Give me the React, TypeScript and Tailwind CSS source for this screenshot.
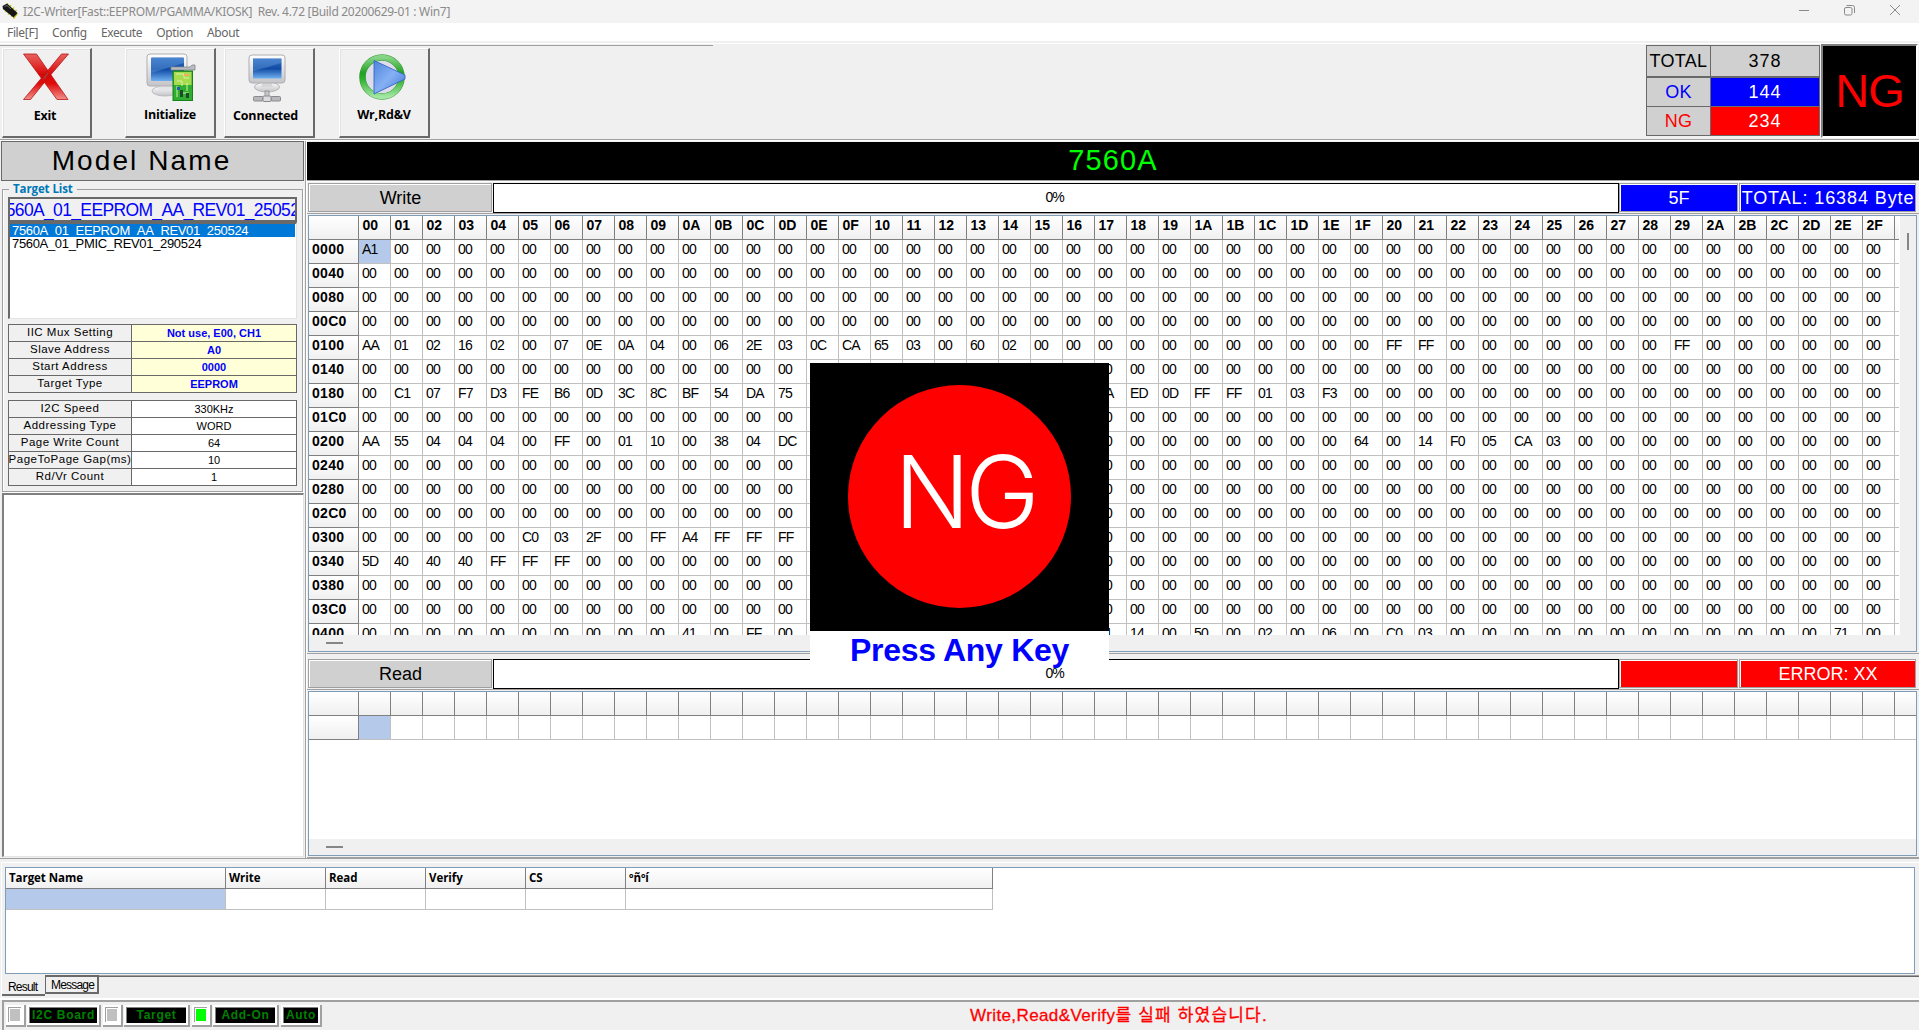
import type { ReactNode } from "react";

const COLUMNS = Array.from({ length: 48 }, (_, i) => i.toString(16).toUpperCase().padStart(2, "0"));

/* Memory contents by row offset; each entry is [start column, bytes]. */
const DATA: Record<string, [number, string][]> = {
  "0000": [[0, "A1"]],
  "0100": [
    [0, "AA 01 02 16 02 00 07 0E 0A 04 00 06 2E 03 0C CA 65 03 00 60 02"],
    [32, "FF FF"],
    [41, "FF"],
  ],
  "0180": [
    [0, "00 C1 07 F7 D3 FE B6 0D 3C 8C BF 54 DA 75"],
    [23, "0A ED 0D FF FF 01 03 F3"],
  ],
  "0200": [
    [0, "AA 55 04 04 04 00 FF 00 01 10 00 38 04 DC"],
    [31, "64 00 14 F0 05 CA 03"],
  ],
  "0300": [[5, "C0 03 2F 00 FF A4 FF FF FF"]],
  "0340": [[0, "5D 40 40 40 FF FF FF"]],
  "0400": [
    [10, "41 00 FF"],
    [23, "01 14 00 50 00 02 00 06 00 C0 03"],
    [46, "71"],
  ],
};

const ROWS = Array.from({ length: 17 }, (_, i) => {
  const address = (i * 64).toString(16).toUpperCase().padStart(4, "0");
  const bytes = COLUMNS.map(() => "00");
  (DATA[address] ?? []).forEach(([start, text]) =>
    text.split(" ").forEach((b, k) => {
      bytes[start + k] = b;
    }),
  );
  return { address, bytes };
});

function HeaderCell({ className, children }: { className: string; children?: ReactNode }) {
  return (
    <div
      className={`shrink-0 border-r border-b border-[#808080] bg-linear-to-b from-white to-[#f0f0f0] font-bold ${className}`}
    >
      {children}
    </div>
  );
}

function HexHeader({ labels }: { labels: string[] }) {
  return (
    <div className="flex h-[24px] w-max">
      <HeaderCell className="w-[50px]" />
      {labels.map((c, i) => (
        <HeaderCell key={i} className="w-[32px] pt-[1px] pl-[3.5px] text-[14px] leading-[17px]">
          {c}
        </HeaderCell>
      ))}
      <HeaderCell className="w-[32px]" />
    </div>
  );
}

function HexRow({ address, bytes, selected }: { address: string; bytes: string[]; selected: boolean }) {
  return (
    <div className="flex h-[24px] w-max">
      <HeaderCell className="w-[50px] pt-[1px] pl-[3px] text-[14px] leading-[17px] tracking-[0.3px]">
        {address}
      </HeaderCell>
      {bytes.map((b, i) => (
        <div
          key={i}
          className={`w-[32px] shrink-0 border-r border-b border-[#c0c0c0] pt-[1px] pl-[3px] text-[14px] leading-[17px] tracking-[-0.8px] ${
            selected && i === 0 ? "bg-[#b5caea]" : "bg-white"
          }`}
        >
          {b}
        </div>
      ))}
      <div className="w-[32px] shrink-0 border-b border-[#c0c0c0]" />
    </div>
  );
}

function Framed({ className, children }: { className: string; children?: ReactNode }) {
  return (
    <div className={`shrink-0 border border-[#a0a0a0] bg-white pt-[1px] pl-[1px] ${className}`}>
      {children}
    </div>
  );
}

function OperationBar({
  title,
  left,
  right,
  color,
}: {
  title: string;
  left: string;
  right: string;
  color: string;
}) {
  return (
    <div className="flex h-[30px] pl-[1px] text-[18px]">
      <Framed className="mr-[1px] h-[29px] w-[184px]">
        <div className="flex h-full items-center justify-center bg-[#d0d0d0]">{title}</div>
      </Framed>
      <div className="flex h-[30px] w-[1126px] shrink-0 items-center justify-center border border-black bg-white pr-[3px] pb-[2px] text-[14px] tracking-[-1.2px]">
        0%
      </div>
      <Framed className="mr-[1px] h-[29px] w-[119px]">
        <div className={`flex h-full items-center justify-center text-white ${color}`}>{left}</div>
      </Framed>
      <Framed className="h-[29px] w-[177px]">
        <div
          className={`flex h-full items-center justify-center overflow-hidden whitespace-nowrap text-white ${color} ${
            right.length > 10 ? "tracking-[0.9px]" : ""
          }`}
        >
          {right}
        </div>
      </Framed>
    </div>
  );
}

function ToolButton({
  label,
  icon,
  className,
  labelClass,
}: {
  label: string;
  icon: ReactNode;
  className: string;
  labelClass: string;
}) {
  return (
    <div
      className={`h-[90px] shrink-0 border-t border-r-2 border-b-2 border-l border-t-white border-r-[#696969] border-b-[#696969] border-l-white bg-[#f0f0f0] shadow-[inset_1px_1px_0_#e3e3e3] ${className}`}
    >
      <div className="flex h-[56px] justify-center pt-[4px]">{icon}</div>
      <div
        className={`text-center font-['Open_Sans','Noto_Sans',sans-serif] text-[12.5px] leading-[18px] font-bold tracking-[-0.2px] ${labelClass}`}
      >
        {label}
      </div>
    </div>
  );
}

function ExitIcon() {
  return (
    <svg width="46" height="48" viewBox="0 0 46 48" className="-ml-[2px]">
      <defs>
        <linearGradient id="exitRed" x1="0" y1="0" x2="0" y2="1">
          <stop offset="0" stopColor="#e8635f" />
          <stop offset="0.45" stopColor="#d80808" />
          <stop offset="0.65" stopColor="#e00c0c" />
          <stop offset="1" stopColor="#f0908c" />
        </linearGradient>
      </defs>
      <path d="M0.5 1H13.5L45 46.5H34Z" fill="url(#exitRed)" stroke="#b81414" strokeWidth="0.8" />
      <path
        d="M38.5 1H45.5L25 25L7.5 46.5H0.5L21 22Z"
        fill="url(#exitRed)"
        stroke="#b81414"
        strokeWidth="0.8"
      />
      <path d="M20.5 26L25 20" stroke="#8a5050" strokeWidth="1.2" />
    </svg>
  );
}

function ScreenGradients({ id }: { id: string }) {
  return (
    <defs>
      <linearGradient id={`${id}s`} x1="0" y1="0" x2="0" y2="1">
        <stop offset="0" stopColor="#2f6fc4" />
        <stop offset="0.45" stopColor="#1450a8" />
        <stop offset="0.5" stopColor="#0f4aa4" />
        <stop offset="1" stopColor="#6fb0f0" />
      </linearGradient>
      <linearGradient id={`${id}g`} x1="0" y1="0" x2="0" y2="1">
        <stop offset="0" stopColor="#ffffff" />
        <stop offset="1" stopColor="#c4c4c8" />
      </linearGradient>
    </defs>
  );
}

function InitializeIcon() {
  return (
    <svg width="50" height="50" viewBox="0 0 50 50" className="ml-[1px]">
      <ScreenGradients id="init" />
      <ellipse cx="19" cy="38" rx="13" ry="5" fill="url(#initg)" stroke="#b4b4b8" strokeWidth="0.8" />
      <path d="M14 30H25L27 38H12Z" fill="#e4e4e8" />
      <rect x="1" y="1" width="40" height="32" rx="3" fill="url(#initg)" stroke="#aeaeb4" />
      <rect x="5" y="4.5" width="33" height="23.5" rx="1" fill="url(#inits)" />
      <path d="M5 5H38V10Q18 16 5 20Z" fill="#79aee8" opacity="0.35" />
      <path d="M25 14H44L46 12H49V17H25Z" fill="#b8bcc0" stroke="#85898d" strokeWidth="0.8" />
      <rect x="27" y="18" width="19.5" height="29.5" fill="#2fae2f" stroke="#1b7f1b" />
      <rect x="28" y="19" width="17.5" height="13" fill="#a8dc50" />
      <path d="M30 21H38V25H43M31 28H36V33M41 30V38M37 40H43M31 33V44" stroke="#d9f2a8" fill="none" />
      <path d="M34 37H37V44H34ZM40 40H43V45H40Z" fill="#1c4a2c" />
      <path d="M31 34h3v3h-3z" fill="#2858b8" />
      <path d="M38 21h5v2h-5z" fill="#f0b060" />
    </svg>
  );
}

function ConnectedIcon() {
  return (
    <svg width="38" height="50" viewBox="0 0 38 50" className="mt-[1px] -ml-[5px]">
      <ScreenGradients id="conn" />
      <ellipse cx="19" cy="33" rx="12.5" ry="5" fill="url(#conng)" stroke="#a8a8ac" strokeWidth="0.8" />
      <path d="M15 28H23L25 33H13Z" fill="#d6d6da" />
      <rect x="1" y="1" width="36" height="28" rx="3" fill="url(#conng)" stroke="#aeaeb4" />
      <rect x="5" y="4.5" width="28.5" height="20" fill="url(#conns)" />
      <path d="M5 5H33V9Q18 14 5 17Z" fill="#79aee8" opacity="0.35" />
      <rect x="17" y="37" width="4" height="8" fill="#c8c8cc" stroke="#8a8a8e" strokeWidth="0.8" />
      <rect x="5.5" y="42.5" width="9.5" height="4.5" rx="1" fill="#b8b8bc" stroke="#8a8a8e" />
      <rect x="23" y="42.5" width="9.5" height="4.5" rx="1" fill="#b8b8bc" stroke="#8a8a8e" />
      <rect x="15" y="42" width="8" height="5.5" rx="1" fill="#dcdce0" stroke="#8a8a8e" />
    </svg>
  );
}

function PlayIcon() {
  return (
    <svg width="47" height="47" viewBox="0 0 47 47" className="mt-[1px] -ml-[3px]">
      <defs>
        <linearGradient id="ring" x1="0" y1="0" x2="0" y2="1">
          <stop offset="0" stopColor="#86d486" />
          <stop offset="0.4" stopColor="#22a022" />
          <stop offset="0.55" stopColor="#2fae2f" />
          <stop offset="1" stopColor="#a2e6a2" />
        </linearGradient>
        <linearGradient id="tri" x1="0" y1="0" x2="1" y2="1">
          <stop offset="0" stopColor="#4d84dc" />
          <stop offset="0.5" stopColor="#86b0f4" />
          <stop offset="1" stopColor="#3f76d4" />
        </linearGradient>
      </defs>
      <circle cx="23" cy="23" r="19.5" fill="#dcdcea" stroke="#3b9a3b" strokeWidth="6.5" />
      <circle cx="23" cy="23" r="19.5" fill="none" stroke="url(#ring)" strokeWidth="5.5" />
      <path d="M15 6.5L46 21V25L15 40Z" fill="url(#tri)" stroke="#3566c4" strokeWidth="0.9" />
    </svg>
  );
}

function ChipIcon() {
  return (
    <svg width="16" height="17" viewBox="0 0 16 17" className="mt-[2px] ml-[2px] shrink-0">
      <path
        d="M1.5 7.5L6 1.5M3.5 10L9 3M6 12.5L12 5.5M9 14.5L14.5 8M11.5 16.5L15.5 11.5"
        stroke="#c8c818"
        strokeWidth="1.5"
      />
      <path d="M0.5 4L5 1.5L15.5 11L11.5 15.5L1 7Z" fill="#161616" />
      <path d="M2.5 4.5L5 3.5L9 7" stroke="#6a6a6a" fill="none" />
    </svg>
  );
}

function CounterRow({
  label,
  value,
  labelColor,
  valueStyle,
  height,
}: {
  label: string;
  value: string;
  labelColor: string;
  valueStyle: string;
  height: string;
}) {
  return (
    <div className={`flex border-[#696969] ${height}`}>
      <div
        className={`flex w-[64px] items-center justify-center border-r border-[#696969] bg-[#d0d0d0] tracking-[0.3px] ${labelColor}`}
      >
        {label}
      </div>
      <div className={`flex flex-1 items-center justify-center tracking-[1px] ${valueStyle}`}>{value}</div>
    </div>
  );
}

function PropertyTable({
  rows,
  valueStyle,
  className,
}: {
  rows: [string, string][];
  valueStyle: string;
  className: string;
}) {
  return (
    <div className={`border-t border-l border-[#696969] ${className}`}>
      {rows.map(([k, v]) => (
        <div key={k} className="flex h-[17px] border-b border-[#696969] whitespace-nowrap">
          <div className="flex w-[123px] justify-center border-r border-[#696969] text-[11.5px] leading-[15px] tracking-[0.5px]">
            {k}
          </div>
          <div
            className={`flex-1 border-r border-[#696969] text-center text-[11px] leading-[17px] ${valueStyle}`}
          >
            {v}
          </div>
        </div>
      ))}
    </div>
  );
}

function Led({ className, color }: { className: string; color: string }) {
  return (
    <div
      className={`h-[22px] w-[20px] shrink-0 border-r-2 border-b-2 border-[#a0a0a0] bg-white p-[2px] ${className}`}
    >
      <div className="h-[15px] w-[13px] border-t border-l border-[#a0a0a0] p-px">
        <div className={`h-[12px] w-[10px] ${color}`} />
      </div>
    </div>
  );
}

function StatusLabel({ className, text }: { className: string; text: string }) {
  return (
    <div className={`h-[22px] shrink-0 border-r-2 border-b-2 border-[#a0a0a0] bg-white p-[2px] ${className}`}>
      <div className="flex h-full items-center justify-center border-t border-l border-[#808080] bg-black pb-[1px] text-[12px] font-bold tracking-[0.7px] whitespace-nowrap text-[#008000]">
        {text}
      </div>
    </div>
  );
}

const RESULT_COLUMNS = [
  { label: "Target Name", width: "w-[220px]" },
  { label: "Write", width: "w-[100px]" },
  { label: "Read", width: "w-[100px]" },
  { label: "Verify", width: "w-[100px]" },
  { label: "CS", width: "w-[100px]" },
  { label: "ºñºí", width: "w-[367px]" },
];

export default function App() {
  return (
    <div className="relative flex h-[1030px] w-[1919px] flex-col overflow-hidden bg-[#f0f0f0] font-['Liberation_Sans','Noto_Sans_CJK_KR',sans-serif] text-black">
      {/* Title bar */}
      <div className="flex h-[23px] shrink-0 bg-[#f3f3f3]">
        <ChipIcon />
        <div className="ml-[5px] font-['Noto_Sans',sans-serif] text-[12px] leading-[24px] tracking-[-0.3px] whitespace-pre text-[#8a8a8a]">
          {"I2C-Writer[Fast::EEPROM/PGAMMA/KIOSK]  Rev. 4.72 [Build 20200629-01 : Win7]"}
        </div>
        <svg width="110" height="20" viewBox="0 0 110 20" className="mr-[14px] ml-auto" fill="none" stroke="#8a8a8a">
          <path d="M4 10.5H14" />
          <rect x="49.5" y="7.5" width="7.5" height="7.5" rx="1.5" />
          <path d="M51.5 5.5H57.5Q59.5 5.5 59.5 7.5V13" />
          <path d="M95 5L105 15M105 5L95 15" />
        </svg>
      </div>

      {/* Menu */}
      <div className="flex h-[18px] shrink-0 gap-[14px] bg-white pl-[7px] font-['Noto_Sans',sans-serif] text-[12px] leading-[20px] tracking-[-0.35px] text-[#666]">
        <span>File[F]</span>
        <span>Config</span>
        <span>Execute</span>
        <span>Option</span>
        <span>About</span>
      </div>

      {/* Toolbar */}
      <div className="mt-[2px] flex h-[96px] shrink-0 border-t border-white">
        <div className="h-[2px] w-[713px] shrink-0 border-b border-[#a0a0a0]">
          <div className="mt-[4px] flex pl-[2px]">
            <ToolButton
              label="Exit"
              icon={<ExitIcon />}
              className="mr-[33px] w-[90px]"
              labelClass="pt-[2px] pr-[3px]"
            />
            <ToolButton
              label="Initialize"
              icon={<InitializeIcon />}
              className="mr-[8px] w-[91px]"
              labelClass="pt-[1px]"
            />
            <ToolButton
              label="Connected"
              icon={<ConnectedIcon />}
              className="mr-[24px] w-[91px]"
              labelClass="pt-[2px] pr-[7px]"
            />
            <ToolButton label="Wr,Rd&V" icon={<PlayIcon />} className="w-[91px]" labelClass="pt-[1px]" />
          </div>
        </div>
        <div className="mt-[1px] ml-auto h-[91px] w-[174px] border-t border-r border-l border-[#696969] text-[18px]">
          <CounterRow
            label="TOTAL"
            value="378"
            labelColor="text-black"
            valueStyle="bg-[#d0d0d0] text-black"
            height="h-[32px] border-b-2"
          />
          <CounterRow
            label="OK"
            value="144"
            labelColor="text-[#0000ff]"
            valueStyle="bg-[#0000ff] text-white"
            height="h-[29px] border-b"
          />
          <CounterRow
            label="NG"
            value="234"
            labelColor="text-[#ff0000]"
            valueStyle="bg-[#ff0000] text-white"
            height="h-[29px] border-b"
          />
        </div>
        <div className="mr-[1px] ml-[1px] flex h-[94px] w-[97px] items-center justify-center border-2 border-t-[#808080] border-r-white border-b-white border-l-[#808080] bg-black pt-[1px] text-[47px] tracking-[-1px] text-[#ff0000]">
          NG
        </div>
      </div>
      <div className="h-[2px] shrink-0 border-t border-b border-t-[#a0a0a0] border-b-white" />

      {/* Work area */}
      <div className="flex h-[718px] shrink-0 border-b border-[#a0a0a0]">
        {/* Left panel */}
        <div className="flex w-[306px] shrink-0 flex-col border-r border-[#a0a0a0] pl-[1px]">
          <div className="flex h-[40px] w-[303px] shrink-0 items-center justify-center border border-[#696969] bg-[#d0d0d0] pr-[22px] text-[28px] tracking-[2.1px]">
            Model Name
          </div>
          <fieldset className="mt-[3px] ml-[1px] h-[308px] w-[301px] shrink-0 border border-[#a0a0a0] pl-[5px] shadow-[inset_1px_0_0_#fff,1px_1px_0_#fff]">
            <legend className="ml-[1px] h-[11px] px-[4px] font-['Open_Sans','Noto_Sans',sans-serif] text-[11.5px] leading-[9px] font-bold tracking-[-0.1px] text-[#0078b8]">
              Target List
            </legend>
            <div className="mt-[2px] flex h-[25px] w-[289px] items-center justify-center overflow-hidden border-2 border-[#696969] pt-[1px] text-[17.5px] tracking-[-0.65px] whitespace-nowrap text-[#0000ff]">
              7560A_01_EEPROM_AA_REV01_250524
            </div>
            <div className="h-[97px] w-[289px] border-t-2 border-r border-b border-l-2 border-t-[#696969] border-r-[#e3e3e3] border-b-[#e3e3e3] border-l-[#696969] bg-white text-[13px] tracking-[-0.33px]">
              <div className="h-[13px] w-[285px] bg-[#0078d7] pl-[2px] leading-[14px] text-white">
                7560A_01_EEPROM_AA_REV01_250524
              </div>
              <div className="h-[13px] pl-[2px] leading-[14px]">7560A_01_PMIC_REV01_290524</div>
            </div>
            <PropertyTable
              className="mt-[5px] w-[289px]"
              valueStyle="bg-[#ffffd8] font-bold text-[#0000ff]"
              rows={[
                ["IIC Mux Setting", "Not use, E00, CH1"],
                ["Slave Address", "A0"],
                ["Start Address", "0000"],
                ["Target Type", "EEPROM"],
              ]}
            />
            <PropertyTable
              className="mt-[7px] w-[289px]"
              valueStyle="bg-white"
              rows={[
                ["I2C Speed", "330KHz"],
                ["Addressing Type", "WORD"],
                ["Page Write Count", "64"],
                ["PageToPage Gap(ms)", "10"],
                ["Rd/Vr Count", "1"],
              ]}
            />
          </fieldset>
          <div className="mt-[1px] mb-[1px] ml-[1px] w-[302px] flex-1 border-t-2 border-r border-b border-l-2 border-t-[#808080] border-r-[#e3e3e3] border-b-[#e3e3e3] border-l-[#808080] bg-white" />
        </div>

        {/* Right panel */}
        <div className="flex w-[1613px] shrink-0 flex-col border-l border-white">
          <div className="mt-[1px] flex h-[38px] shrink-0 items-center justify-center bg-black text-[29px] tracking-[1.1px] text-[#00ff00]">
            7560A
          </div>
          <div className="mb-[2px] h-[1px] shrink-0 bg-[#a0a0a0] shadow-[0_1px_0_#fff]" />
          <OperationBar title="Write" left="5F" right="TOTAL: 16384 Byte" color="bg-[#0000ff]" />
          <div className="h-[1px] shrink-0 bg-[#a0a0a0]" />
          <div className="mt-[1px] ml-[1px] h-[437px] w-[1609px] shrink-0 border border-[#7f9db9]">
            <div className="flex">
              <div className="h-[419px] w-[1591px] overflow-hidden border-r border-white bg-white">
                <HexHeader labels={COLUMNS} />
                {ROWS.map((r) => (
                  <HexRow key={r.address} address={r.address} bytes={r.bytes} selected={r.address === "0000"} />
                ))}
              </div>
              <div className="h-[419px] flex-1 pt-[17px] pl-[7px]">
                <div className="h-[17px] w-[2px] bg-[#868686]" />
              </div>
            </div>
            <div className="h-[16px] pt-[7px] pl-[17px]">
              <div className="h-[2px] w-[17px] bg-[#868686]" />
            </div>
          </div>
          <div className="mt-[1px] mb-[5px] h-[1px] shrink-0 bg-[#a0a0a0]" />
          <OperationBar title="Read" left="" right="ERROR: XX" color="bg-[#ff0000]" />
          <div className="h-[1px] shrink-0 bg-[#a0a0a0]" />
          <div className="mt-[1px] ml-[1px] h-[165px] w-[1609px] shrink-0 overflow-hidden border border-[#7f9db9] bg-white">
            <div className="h-[147px] overflow-hidden">
              <HexHeader labels={COLUMNS.map(() => "")} />
              <HexRow address="" bytes={COLUMNS.map(() => "")} selected />
            </div>
            <div className="h-[16px] bg-[#f0f0f0] pt-[7px] pl-[17px]">
              <div className="h-[2px] w-[17px] bg-[#868686]" />
            </div>
          </div>
          <div className="mt-[1px] h-[1px] shrink-0 bg-[#a0a0a0]" />
        </div>
      </div>

      {/* Results */}
      <div className="mt-[3px] ml-[1px] flex h-[138px] shrink-0 flex-col border-t border-l border-white pt-[4px] pl-[3px]">
        <div className="h-[107px] w-[1910px] shrink-0 border border-[#7f9db9] bg-white">
          <div className="flex h-[21px] font-['Open_Sans','Noto_Sans',sans-serif] text-[11.5px] leading-[20px] tracking-[-0.05px]">
            {RESULT_COLUMNS.map((c) => (
              <HeaderCell key={c.label} className={`pl-[3px] ${c.width}`}>
                {c.label}
              </HeaderCell>
            ))}
          </div>
          <div className="flex h-[21px]">
            {RESULT_COLUMNS.map((c, i) => (
              <div
                key={c.label}
                className={`shrink-0 border-r border-b border-[#c0c0c0] ${c.width} ${i === 0 ? "bg-[#b5caea]" : ""}`}
              />
            ))}
          </div>
        </div>
        <div className="ml-[-3px] flex h-[22px] shrink-0 text-[12px] tracking-[-0.8px]">
          <div className="mt-[1px] h-[21px] w-[43px] border-b-2 border-[#696969] pl-[6px] leading-[25px]">Result</div>
          <div className="mt-[1px] h-[19px] w-[54px] border-t-2 border-r-2 border-b-2 border-l border-[#696969] pl-[5px] leading-[17px]">
            Message
          </div>
          <div className="mt-[1px] h-[2px] flex-1 border-t border-b border-t-[#a0a0a0] border-b-[#696969]" />
        </div>
      </div>

      {/* Status bar */}
      <div className="mt-[-2px] h-[2px] shrink-0 bg-white" />
      <div className="ml-[2px] flex h-[30px] shrink-0 border-t-2 border-l-2 border-[#a0a0a0] pt-[3px]">
        <Led className="mr-[1px] ml-[2px]" color="bg-[#c0c0c0]" />
        <StatusLabel className="mr-[2px] w-[74px]" text="I2C Board" />
        <Led className="mr-[1px]" color="bg-[#c0c0c0]" />
        <StatusLabel className="mr-[2px] w-[66px]" text="Target" />
        <Led className="mr-[1px]" color="bg-[#00ff00]" />
        <StatusLabel className="mr-[2px] w-[66px]" text="Add-On" />
        <StatusLabel className="w-[41px]" text="Auto" />
        <div className="ml-[648px] text-[17px] leading-[22px] tracking-[0.4px] whitespace-nowrap text-[#ff0000] [-webkit-text-stroke:0.3px_#ff0000]">
          Write,Read&amp;Verify<span className="tracking-[1.2px]">를 실패 하였습니다.</span>
        </div>
      </div>

      {/* Result popup */}
      <div className="absolute top-[363px] left-[810px] h-[300px] w-[299px] bg-white">
        <div className="flex h-[268px] items-start justify-center bg-black pt-[22px]">
          <div className="flex h-[223px] w-[223px] items-center justify-center rounded-full bg-[#ff0000] pb-[10px] pl-[10px] font-['Inter','Liberation_Sans',sans-serif] text-[100px] leading-none font-light tracking-[-5px] text-white">
            NG
          </div>
        </div>
        <div className="text-center text-[32px] leading-[38px] font-bold tracking-[-0.3px] text-[#0000ff]">
          Press Any Key
        </div>
      </div>
    </div>
  );
}
